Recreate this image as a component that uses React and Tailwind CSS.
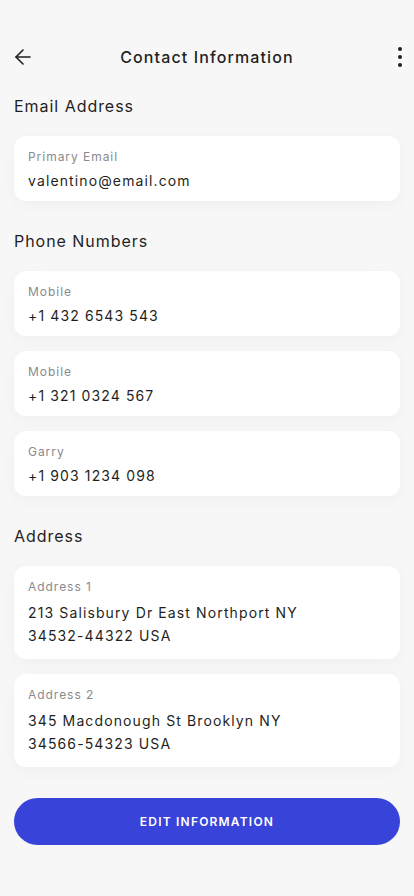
import { ArrowLeft } from 'lucide-react'

const font = { fontFamily: 'Inter, "Noto Sans", sans-serif' }

function InfoCard({ label, lines }) {
  const multi = lines.length > 1
  return (
    <div
      className={
        'rounded-xl bg-white px-[14px] pt-[14px] shadow-[0_4px_16px_rgba(0,0,0,0.035)] ' +
        (multi ? 'pb-[12px]' : 'pb-[9px]')
      }
    >
      <div className="text-[12px] leading-[14px] tracking-[0.08em] text-[#8a8a8e]">{label}</div>
      <div
        className={
          'text-[14px] leading-[23px] tracking-[0.08em] text-[#1f1f23] ' + (multi ? 'mt-[7px]' : 'mt-[5px]')
        }
      >
        {lines.map((l) => (
          <div key={l}>{l}</div>
        ))}
      </div>
    </div>
  )
}

function Section({ title, children }) {
  return (
    <section>
      <h2 className="text-[16px] leading-[20px] tracking-[0.06em] text-[#1f1f23]">{title}</h2>
      <div className="mt-5 flex flex-col gap-[15px]">{children}</div>
    </section>
  )
}

export default function App() {
  return (
    <div style={font} className="min-h-[896px] w-[414px] bg-[#f7f7f8] px-[14px]">
      <header className="flex w-full items-center pt-[45px] pb-[27px]">
        <div className="flex w-[40px] items-center">
          <ArrowLeft size={24} strokeWidth={1.6} className="-ml-[3px] text-[#1f1f23]" />
        </div>
        <h1 className="flex-1 text-center text-[16px] leading-[22px] font-medium tracking-[0.07em] text-[#1f1f23]">
          Contact Information
        </h1>
        <div className="flex w-[40px] justify-end">
          <div className="-mr-[3px] flex w-[6px] flex-col items-center gap-[4px]">
            <span className="h-[4px] w-[4px] rounded-full bg-[#1f1f23]" />
            <span className="h-[4px] w-[4px] rounded-full bg-[#1f1f23]" />
            <span className="h-[4px] w-[4px] rounded-full bg-[#1f1f23]" />
          </div>
        </div>
      </header>
      <div className="flex flex-col gap-[30px]">
        <Section title="Email Address">
          <InfoCard label="Primary Email" lines={['valentino@email.com']} />
        </Section>
        <Section title="Phone Numbers">
          <InfoCard label="Mobile" lines={['+1 432 6543 543']} />
          <InfoCard label="Mobile" lines={['+1 321 0324 567']} />
          <InfoCard label="Garry" lines={['+1 903 1234 098']} />
        </Section>
        <Section title="Address">
          <InfoCard label="Address 1" lines={['213 Salisbury Dr East Northport NY', '34532-44322 USA']} />
          <InfoCard label="Address 2" lines={['345 Macdonough St Brooklyn NY', '34566-54323 USA']} />
        </Section>
      </div>
      <button className="mt-[31px] flex h-[47px] w-full items-center justify-center rounded-full bg-[#3843d9] text-[12px] font-semibold tracking-[0.1em] text-white">
        EDIT INFORMATION
      </button>
    </div>
  )
}
